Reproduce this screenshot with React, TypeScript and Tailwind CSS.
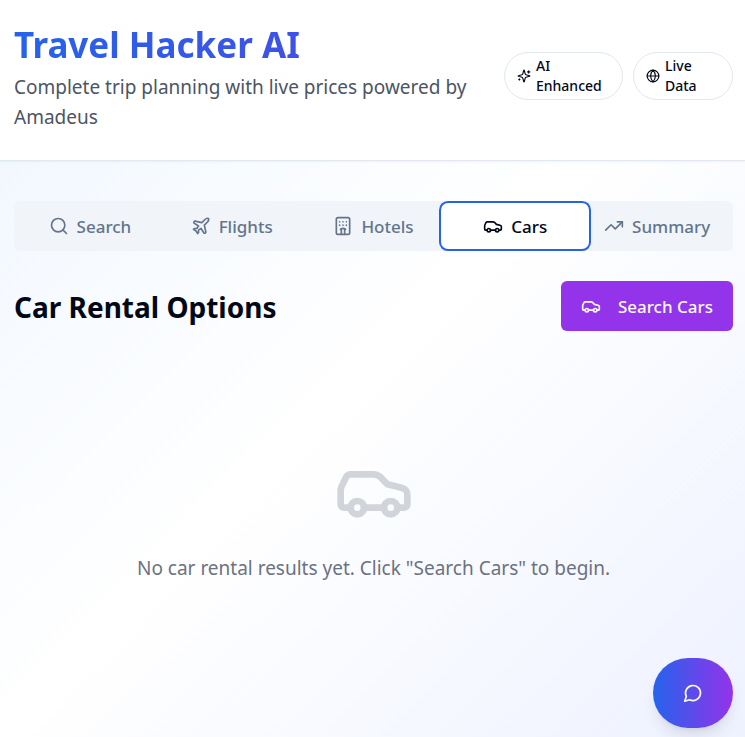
import React from "react";
import { Car, Globe, Hotel, Plane, Search, TrendingUp } from "lucide-react";

function Sparkles({ className }: { className?: string }) {
  return (
    <svg viewBox="0 0 24 24" fill="none" stroke="currentColor" strokeWidth="2" strokeLinecap="round" strokeLinejoin="round" className={className} aria-hidden="true">
      <path d="M9.937 15.5A2 2 0 0 0 8.5 14.063l-6.135-1.582a.5.5 0 0 1 0-.962L8.5 9.936A2 2 0 0 0 9.937 8.5l1.582-6.135a.5.5 0 0 1 .963 0L14.063 8.5A2 2 0 0 0 15.5 9.937l6.135 1.581a.5.5 0 0 1 0 .964L15.5 14.063a2 2 0 0 0-1.437 1.437l-1.582 6.135a.5.5 0 0 1-.963 0z" />
      <path d="M20 3v4M22 5h-4M4 17v2M5 18H3" />
    </svg>
  );
}

function ChatBubble({ className }: { className?: string }) {
  return (
    <svg viewBox="0 0 24 24" fill="none" stroke="currentColor" strokeWidth="2" strokeLinecap="round" strokeLinejoin="round" className={className} aria-hidden="true">
      <path d="M7.9 20A9 9 0 1 0 4 16.1L2 22Z" />
    </svg>
  );
}

const tabs = [
  { name: "Search", Icon: Search },
  { name: "Flights", Icon: Plane },
  { name: "Hotels", Icon: Hotel },
  { name: "Cars", Icon: Car },
  { name: "Summary", Icon: TrendingUp },
];

function Badge({ Icon, children }: { Icon: React.ElementType; children: React.ReactNode }) {
  return (
    <div className="flex items-center gap-[5px] rounded-full border border-slate-200 px-3 py-[3px] text-[14px] leading-5 font-medium text-[#020817]">
      <Icon className="size-[14px] shrink-0" />
      <span>{children}</span>
    </div>
  );
}

export default function App() {
  const [active, setActive] = React.useState("Cars");
  return (
    <div className="min-h-screen bg-linear-to-br/srgb from-[#eff6ff] via-white to-[#eef2ff] font-['Noto_Sans','Open_Sans',sans-serif] text-[#020817]">
      <header className="border-b border-slate-200 bg-white pt-5 pr-3 pb-7 pl-[14px] shadow-xs">
        <div className="flex items-center justify-between gap-5">
          <div className="min-w-0 flex-1">
            <h1 className="bg-linear-to-r/srgb from-[#2563eb] to-[#4f46e5] bg-clip-text pb-0.5 text-[35px] leading-[50px] font-bold text-transparent">
              Travel Hacker AI
            </h1>
            <p className="text-[19px] leading-[30px] text-[#4b5563]">
              Complete trip planning with live prices powered by Amadeus
            </p>
          </div>
          <div className="flex shrink-0 gap-[10px]">
            <div className="flex w-[119px] *:w-full">
              <Badge Icon={Sparkles}>AI Enhanced</Badge>
            </div>
            <div className="flex w-[100px] *:w-full">
              <Badge Icon={Globe}>Live<br />Data</Badge>
            </div>
          </div>
        </div>
      </header>

      <main className="pt-10 pr-3 pb-10 pl-[14px]">
        <div role="tablist" className="grid grid-cols-5 rounded-md bg-[#f1f5f9] p-[5px] text-[#64748b]">
          {tabs.map(({ name, Icon }) => (
            <button
              key={name}
              type="button"
              role="tab"
              aria-selected={active === name}
              onClick={() => setActive(name)}
              className={
                "flex h-10 items-center justify-center gap-2 rounded-sm text-[17px] leading-[26px] font-medium outline-none " +
                (active === name ? "bg-white text-[#020817] ring-2 ring-[#2563eb] ring-offset-3 ring-offset-white" : "")
              }
            >
              <Icon className="size-5 shrink-0" />
              <span className="pt-0.5">{name}</span>
            </button>
          ))}
        </div>

        <div className="mt-[30px] flex items-center justify-between">
          <h2 className="pt-0.5 text-[28px] leading-10 font-bold">Car Rental Options</h2>
          <button type="button" className="flex h-[50px] items-center gap-[17px] rounded-md bg-[#9333ea] px-5 text-[17px] leading-[26px] font-medium text-slate-50">
            <Car className="size-5" />
            <span className="pt-0.5">Search Cars</span>
          </button>
        </div>

        <div className="pt-[120px] text-center">
          <Car className="mx-auto size-20 text-[#d1d5db]" />
          <p className="mt-5 pt-0.5 text-[19px] leading-[30px] text-[#6b7280]">
            No car rental results yet. Click "Search Cars" to begin.
          </p>
        </div>
      </main>

      <button
        type="button"
        aria-label="Open chat"
        className="fixed right-3 bottom-[9px] flex h-[70px] w-20 items-center justify-center rounded-full bg-linear-to-r/srgb from-[#2563eb] to-[#9333ea] text-slate-50 shadow-lg"
      >
        <ChatBubble className="size-5" />
      </button>
    </div>
  );
}
